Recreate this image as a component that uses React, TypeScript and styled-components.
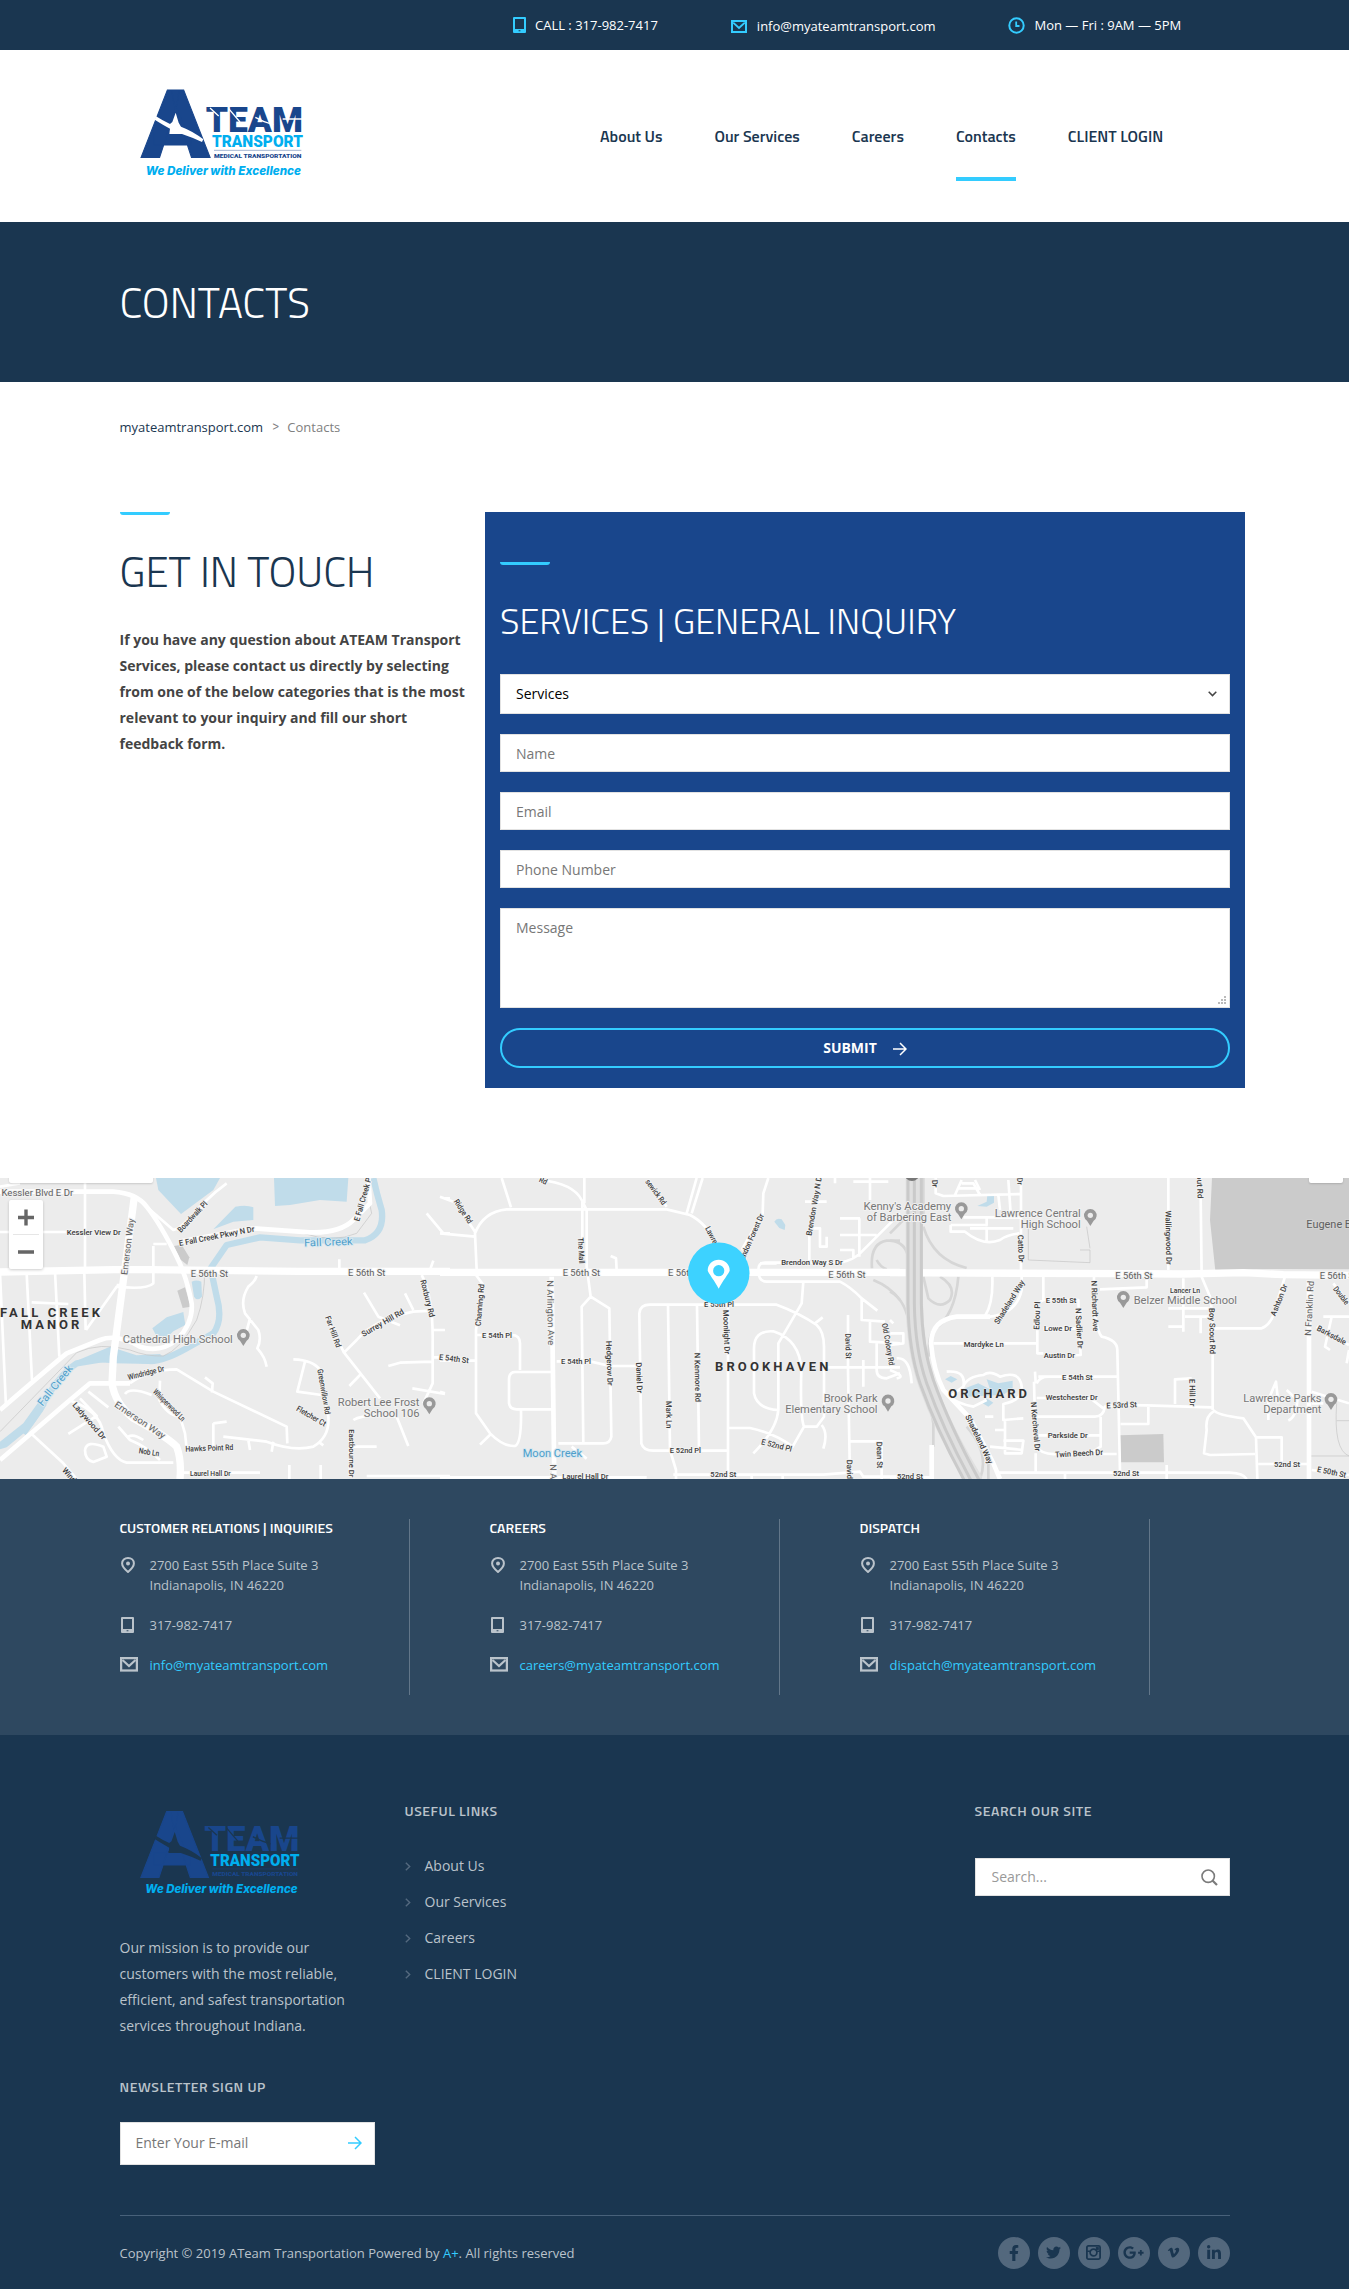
import React from 'react';
import styled, { createGlobalStyle } from 'styled-components';
import { FaFacebookF, FaTwitter, FaGooglePlusG, FaVimeoV, FaLinkedinIn } from 'react-icons/fa';

const navy = '#1a3650';
const slate = '#2e4860';
const royal = '#19468c';
const sky = '#33ccff';
const mist = '#bac3cb';
const head = '"Titillium Web", "Open Sans", sans-serif';

const GlobalStyle = createGlobalStyle`
  *, *::before, *::after { box-sizing: border-box; }
  body { margin: 0; background: #fff; font: 14px/26px "Open Sans", sans-serif; color: #444; }
  h1, h2, h3, h4, p, ul { margin: 0; padding: 0; }
  ul { list-style: none; }
  a { color: inherit; text-decoration: none; }
  svg { display: block; }
  input, textarea, button { font: inherit; border-radius: 0; outline: none; }
`;

/* ---------- layout ---------- */
const Container = styled.div`
  width: 1110px;
  margin: 0 auto;
`;

const TopBar = styled.div`
  height: 50px;
  padding-left: 513px;
  display: flex;
  align-items: center;
  gap: 73px;
  background: ${navy};
  color: #fff;
  font-size: 13px;
  line-height: 20px;
`;
const TopItem = styled.div<{ $drop?: number; $gap?: number }>`
  display: flex;
  align-items: center;
  gap: ${(p) => p.$gap ?? 9}px;
  padding-top: ${(p) => p.$drop ?? 0}px;
  white-space: nowrap;
  svg { color: ${sky}; }
`;

const Header = styled.header`
  height: 172px;
  display: flex;
  padding: 30px 0 0 130px;
`;
const LogoSlot = styled.div`
  width: 470px;
`;
const Nav = styled.nav`
  display: flex;
  align-self: flex-start;
  margin-top: 11px;
  gap: 52px;
  font: 600 16px/90px ${head};
  color: ${navy};
`;
const NavLink = styled.a<{ $active?: boolean }>`
  height: 90px;
  border-bottom: 4px solid ${(p) => (p.$active ? sky : 'transparent')};
`;

const TitleBand = styled.div`
  height: 160px;
  display: flex;
  align-items: center;
  background: ${navy};
`;
const PageTitle = styled.h1`
  font: 300 42px/50px ${head};
  color: #fff;
`;
const Crumbs = styled.div`
  display: flex;
  padding-top: 35px;
  height: 130px;
  font-size: 13px;
  line-height: 20px;
  color: #808080;
  a { color: ${navy}; }
`;
const CrumbSep = styled.span`
  margin: -2px 8px 0 9px;
  font-family: ${head};
`;

const Columns = styled.div`
  display: flex;
  height: 666px;
  align-items: flex-start;
`;
const Intro = styled.div`
  flex: none;
  width: 365.5px;
`;
const Accent = styled.div`
  width: 50px;
  height: 3px;
  border-radius: 0 0 3px 3px;
  background: ${sky};
`;
const IntroTitle = styled.h2`
  margin: 31px 0 31px;
  font: 300 42px/50px ${head};
  color: ${navy};
`;
const IntroText = styled.p`
  width: 350px;
  font-weight: 700;
`;

/* ---------- form ---------- */
const FormPanel = styled.form`
  flex: none;
  width: 760px;
  height: 576px;
  padding: 50px 15px 0;
  background: ${royal};
`;
const FormTitle = styled.h2`
  margin: 36px 0 33px;
  font: 300 36px/40px ${head};
  color: #fff;
`;
const Fields = styled.div`
  display: flex;
  flex-direction: column;
  gap: 20px;
`;
const SelectBox = styled.div`
  height: 40px;
  padding: 0 12px 0 15px;
  display: flex;
  align-items: center;
  justify-content: space-between;
  border: 1px solid #e2e2e2;
  background: #fff;
  color: #000;
`;
const Input = styled.input`
  width: 100%;
  height: 38px;
  padding: 0 15px;
  border: 1px solid #e2e2e2;
  background: #fff;
  &::placeholder { color: #777; opacity: 1; }
`;
const AreaWrap = styled.div`
  position: relative;
  height: 100px;
  svg { position: absolute; right: 4px; bottom: 4px; }
`;
const Area = styled.textarea`
  display: block;
  width: 100%;
  height: 100px;
  padding: 6px 15px;
  resize: none;
  border: 1px solid #e2e2e2;
  background: #fff;
  &::placeholder { color: #777; opacity: 1; }
`;
const Submit = styled.button`
  height: 40px;
  display: flex;
  align-items: center;
  justify-content: center;
  gap: 16px;
  border: 2px solid ${sky};
  border-radius: 20px !important;
  background: transparent;
  color: #fff;
  font-weight: 700;
  svg { margin-top: 2px; }
`;

/* ---------- map ---------- */
const MapFrame = styled.div`
  position: relative;
  height: 301px;
  overflow: hidden;
  background: #ececec;
`;
const ZoomControl = styled.div`
  position: absolute;
  left: 9px;
  top: 22px;
  width: 34px;
  height: 69px;
  border-radius: 2px;
  background: #fff;
  box-shadow: 0 1px 3px rgba(0, 0, 0, 0.2);
`;
const MapTab = styled.div<{ $left: number; $width: number }>`
  position: absolute;
  top: -10px;
  left: ${(p) => p.$left}px;
  width: ${(p) => p.$width}px;
  height: 15px;
  border-radius: 2px;
  background: #fff;
  box-shadow: 0 1px 2px rgba(0, 0, 0, 0.15);
`;

/* ---------- offices ---------- */
const Offices = styled.section`
  height: 256px;
  padding-top: 40px;
  background: ${slate};
  color: ${mist};
  font-size: 13px;
  line-height: 20px;
`;
const OfficeGrid = styled(Container)`
  display: grid;
  grid-template-columns: repeat(3, 290px);
  column-gap: 80px;
`;
const Office = styled.div`
  height: 176px;
  border-right: 1px solid #627689;
`;
const OfficeTitle = styled.h4`
  margin-bottom: 18px;
  font: 600 14px/18px ${head};
  color: #fff;
`;
const OfficeRows = styled.div`
  display: grid;
  grid-template-columns: 18px auto;
  column-gap: 12px;
  row-gap: 20px;
  a { color: ${sky}; }
`;
const IconCell = styled.span<{ $wide?: boolean }>`
  display: flex;
  justify-content: center;
  align-items: flex-start;
  padding: 2px ${(p) => (p.$wide ? 0 : 2)}px 0 0;
`;

/* ---------- footer ---------- */
const Footer = styled.footer`
  height: 554px;
  background: ${navy};
  color: ${mist};
`;
const FooterGrid = styled(Container)`
  display: grid;
  grid-template-columns: repeat(4, 255px);
  column-gap: 30px;
  height: 481px;
  border-bottom: 1px solid #48617a;
`;
const AboutCol = styled.div`
  padding-top: 65px;
`;
const FooterLogo = styled.div`
  margin: 0 0 27px 10px;
`;
const About = styled.p`
  margin-bottom: 38px;
`;
const WidgetTitle = styled.h4`
  font: 600 14px/20px ${head};
  letter-spacing: 0.56px;
`;
const Widget = styled.div`
  padding-top: 66px;
`;
const EmailField = styled.div`
  display: flex;
  align-items: center;
  height: 43px;
  margin-top: 25px;
  padding-right: 12px;
  border: 1px solid #e2e2e2;
  background: #fff;
  color: ${sky};
`;
const SearchField = styled(EmailField)`
  height: 38px;
  margin-top: 37px;
  padding-right: 11px;
  color: #7b7b7b;
`;
const PlainInput = styled.input<{ $tone: string; $inset?: number }>`
  flex: 1;
  min-width: 0;
  padding: 0 ${(p) => p.$inset ?? 15}px;
  border: 0;
  background: none;
  &::placeholder { color: ${(p) => p.$tone}; opacity: 1; }
`;
const LinkList = styled.ul`
  display: grid;
  row-gap: 10px;
  margin-top: 32px;
`;
const LinkItem = styled.li`
  display: flex;
  align-items: center;
  gap: 14px;
  svg { color: #54697f; }
`;
const Bottom = styled(Container)`
  display: flex;
  justify-content: space-between;
  align-items: center;
  height: 73px;
  font-size: 13px;
  a { color: ${sky}; }
`;
const Socials = styled.div`
  display: flex;
  gap: 8px;
`;
const Social = styled.span`
  width: 32px;
  height: 32px;
  display: flex;
  align-items: center;
  justify-content: center;
  border-radius: 50%;
  background: #53687d;
  color: ${navy};
`;

/* ---------- icons ---------- */
const PhoneIcon = () => (
  <svg width="13" height="16" viewBox="0 0 13 16" fill="currentColor" fillRule="evenodd">
    <path d="M1 0h11a1 1 0 0 1 1 1v14a1 1 0 0 1-1 1H1a1 1 0 0 1-1-1V1a1 1 0 0 1 1-1zM2 2v10h9V2zM5.6 13.3v1h1.8v-1z" />
  </svg>
);
const MailIcon = ({ w = 16 }: { w?: number }) => (
  <svg width={w} height={(w * 13) / 16} viewBox="0 0 16 13" fill="none" stroke="currentColor">
    <rect x="1" y="1" width="14" height="11" strokeWidth="2" />
    <path d="M2.2 2.6L8 8l5.800-5.400" strokeWidth="1.900" />
  </svg>
);
const ClockIcon = () => (
  <svg width="17" height="17" viewBox="0 0 17 17" fill="none" stroke="currentColor" strokeWidth="2">
    <circle cx="8.500" cy="8.500" r="7.200" />
    <path d="M8.200 4.500V9h3.300" strokeWidth="1.800" />
  </svg>
);
const PlaceIcon = () => (
  <svg width="14" height="16" viewBox="0 0 14 16">
    <path d="M7 1C3.600 1 1.100 3.300 1.100 6.400 1.100 9.600 4.200 12.500 7 15c2.800-2.500 5.900-5.400 5.900-8.600C12.900 3.300 10.400 1 7 1z" fill="none" stroke="currentColor" strokeWidth="2" />
    <circle cx="7" cy="6.500" r="2" fill="currentColor" />
  </svg>
);
const ArrowIcon = () => (
  <svg width="14" height="14" viewBox="0 0 14 14" fill="none" stroke="currentColor" strokeWidth="1.500">
    <path d="M0 7h13M7 1l6 6-6 6" />
  </svg>
);
const SearchIcon = () => (
  <svg width="17" height="17" viewBox="0 0 17 17" fill="none" stroke="currentColor">
    <circle cx="7.200" cy="7.200" r="6.200" strokeWidth="1.600" />
    <path d="M11.500 11.500l4.500 4.500" strokeWidth="2.200" />
  </svg>
);
const CameraIcon = () => (
  <svg width="15" height="15" viewBox="0 0 15 15" fill="none" stroke="currentColor">
    <rect x="0.900" y="0.900" width="13.200" height="13.200" rx="1.500" strokeWidth="1.800" />
    <circle cx="7.500" cy="7.500" r="3.400" strokeWidth="1.700" />
    <path d="M1 6.300h3.200M10.800 6.300H14" strokeWidth="1.400" />
    <rect x="10.300" y="2.600" width="2" height="1.800" fill="currentColor" />
  </svg>
);

/* ---------- logo ---------- */
const Logo = ({ cut, scale = 1 }: { cut: string; scale?: number }) => (
  <svg width={190 * scale} height={110 * scale} viewBox="0 0 570 330">
    <g fontFamily="Roboto" fontWeight="900" fill={royal}>
      <text x="34" y="235" fontSize="284" textLength="206" lengthAdjust="spacingAndGlyphs" stroke={royal} strokeWidth="3">A</text>
      <path d="M112 158L138 78l34 80z" />
      <path d="M78 109Q98 122 120 132L127 126 137 98 146 128 153 140Q190 154 220 178L216 186Q186 172 156 162H118L120 146Q98 134 74 119z" fill={cut} />
      <text x="227" y="156" fontSize="107" textLength="292" lengthAdjust="spacingAndGlyphs">TEAM</text>
      <path d="M240 84l26 24M296 86l34 40M376 112q24 14 54 22M458 117h62" stroke={cut} strokeWidth="4" fill="none" />
      <text x="246" y="202" fontSize="49" textLength="273" lengthAdjust="spacingAndGlyphs" fill="#00aeef">TRANSPORT</text>
      <path d="M252 211h262" stroke={royal} strokeOpacity=".4" strokeWidth="3" />
      <text x="252" y="234" fontSize="17.500" textLength="262" lengthAdjust="spacingAndGlyphs">MEDICAL TRANSPORTATION</text>
    </g>
    <text x="47" y="285" fontSize="36" fontFamily="Inter" fontWeight="800" fontStyle="italic" textLength="466" lengthAdjust="spacingAndGlyphs" fill="#00aeef">We Deliver with Excellence</text>
  </svg>
);

/* ---------- map drawing: three sheets, three units per pixel ---------- */
type Kind = 's' | 'm' | 'p' | 'w' | 'n' | 'd';
type Label = [text: string, cx: number, cy: number, len: number, rot?: number, kind?: Kind];
type Sheet = {
  x: number;
  water?: string[];
  stream?: string;
  grey?: string[];
  ramps?: string[];
  thin?: string;
  minor?: string;
  major?: string;
  main: string;
  pins: [number, number][];
  labels: Label[];
};

const tones: Record<Kind, { fill: string; size: number; weight: number; halo: string }> = {
  s: { fill: '#3c3c3c', size: 24, weight: 500, halo: '#f2f2f2' },
  m: { fill: '#606060', size: 27, weight: 400, halo: '#f2f2f2' },
  p: { fill: '#777', size: 33, weight: 400, halo: '#f2f2f2' },
  d: { fill: '#606060', size: 33, weight: 400, halo: '#d2d2d2' },
  w: { fill: '#4f9fcb', size: 32, weight: 400, halo: '#d8e8f0' },
  n: { fill: '#333', size: 39, weight: 700, halo: '#f2f2f2' },
};

const sheets: Sheet[] = [
  {
    x: 0,
    water: [
      'M468 24H660L640 60 543 132 475 60z',
      'M822 24H1045L1040 95 960 90 870 105 825 108z',
      'M640 178L706 110Q740 104 760 112V150L700 155z',
      'M575 335Q590 328 604 335L606 380Q592 396 582 380z',
      'M457 475L500 442 550 426 556 465 520 484 482 522z',
      'M230 572L330 530 410 556 480 552 500 570 450 582 340 580z',
      'M0 815L70 760 120 690 140 705 95 770 20 832 0 838z',
    ],
    stream: 'M1120 24Q1130 70 1145 120Q1155 190 1095 211H900L780 202 680 225 632 295 650 380Q670 450 640 490L560 535Q480 580 440 572L340 562 230 580Q170 620 120 720L70 790',
    grey: ['M522 228L545 224 568 262 562 285 540 268z', 'M532 362L555 352 572 410 548 414z'],
    thin: 'M614 300Q615 380 590 450Q540 540 490 558Q440 560 390 540Q300 515 230 548L180 600 0 785M760 178Q860 170 910 190Q1000 220 1070 190L1115 130 1100 60',
    minor:
      'M255 24V300M0 186H200M80 310L96 630M0 310L18 710M253 310L257 480M95 397L205 402M165 305L178 560M460 228V340Q440 360 350 350L258 480M365 345L350 345M500 222H460M440 110L520 180 550 170Q610 90 680 40M530 180L620 100M770 318Q765 335 745 350Q720 390 735 430L775 480Q785 510 772 535Q795 560 800 590M750 445L730 520M1018 268V300M1300 272L1290 300M1092 368L1135 440 1200 466M1215 370L1240 420M1265 315Q1300 380 1298 520V640L1270 700M1300 422L1240 425Q1120 450 1070 510L1032 548 980 440M1030 545L1140 685M1080 615L1048 648M1165 588L1200 578 1298 575M1300 562H1350M1300 480H1335M1237 655L1335 672M880 568Q940 570 960 600L985 740Q990 800 940 830Q880 845 800 815L670 800M915 575L892 665 965 675M955 815L970 826M390 640Q440 600 530 598L640 665 860 770 862 820M615 622L638 640 636 668M480 632L478 690Q500 735 540 740L555 790 560 835M455 675Q390 650 375 672M640 760L680 755M640 760V830M820 815L815 845M745 810L750 840M205 690Q300 720 310 790Q340 870 380 878H520M210 690L80 800M265 665L325 712M240 685L290 738 205 792M95 792L190 880 230 927M355 770L390 810Q440 830 480 870M385 800Q400 790 430 810M255 840Q260 810 310 830L320 860 280 876Q255 870 255 840M550 908H780M868 885V927M962 885V927M1100 918H1350M1060 750Q1090 730 1190 740L1225 828M1050 780V920M1060 830H1130M1280 130L1330 190H1350M1335 85H1350M205 24V30M0 50L60 40',
    major: 'M0 65H340Q410 70 440 110Q480 160 530 260Q560 320 575 400Q580 460 530 510Q480 550 420 530Q350 490 300 510L200 550Q150 590 0 720M540 215L760 175 930 187Q1020 190 1060 150L1110 100 1105 24M0 870L210 690 270 640H390',
    main: 'M0 306L380 298 900 304H1350M403 80L340 560 336 640Q345 700 400 745Q500 800 530 830Q545 870 540 927',
    pins: [[730, 500], [1288, 705]],
    labels: [
      ['Kessler Blvd E Dr', 112, 68, 215, 0, 'm'],
      ['Kessler View Dr', 281, 186, 162],
      ['Emerson Way', 383, 230, 170, -83, 'm'],
      ['Boardwalk Pl', 577, 140, 118, -47],
      ['E Fall Creek Pkwy N Dr', 650, 198, 230, -11],
      ['E Fall Creek P', 1088, 88, 135, -74],
      ['Fall Creek', 985, 216, 146, -2, 'w'],
      ['Fall Creek', 165, 646, 148, -51, 'w'],
      ['E 56th St', 628, 311, 112, 0, 'm'],
      ['E 56th St', 1100, 308, 112, 0, 'm'],
      ['FALL CREEK', 150, 426, 300, 0, 'n'],
      ['MANOR', 150, 464, 176, 0, 'n'],
      ['Cathedral High School', 533, 506, 330, 0, 'p'],
      ['Robert Lee Frost', 1136, 695, 245, 0, 'p'],
      ['School 106', 1175, 728, 167, 0, 'p'],
      ['Windridge Dr', 438, 608, 112, -14],
      ['Whisperwood Ln', 508, 705, 125, 45],
      ['Emerson Way', 420, 750, 178, 34, 'm'],
      ['Ladywood Dr', 268, 753, 140, 49],
      ['Nob Ln', 447, 846, 62, 8],
      ['Hawks Point Rd', 628, 834, 144, -2],
      ['Laurel Hall Dr', 631, 910, 122],
      ['Wind', 208, 915, 50, 48],
      ['Roxbury Rd', 1283, 385, 115, 76],
      ['Surrey Hill Rd', 1148, 458, 142, -30],
      ['Far Hill Rd', 1000, 485, 98, 70],
      ['Greenwillow Rd', 972, 665, 138, 80],
      ['Fletcher Ct', 934, 738, 98, 30],
      ['Eastbourne Dr', 1054, 850, 145, 90],
    ],
  },
  {
    x: 440,
    water: ['M1003 155Q1010 142 1025 148L1036 165 1034 180 1018 174z'],
    minor:
      'M185 24L213 112M300 30Q400 40 425 90L440 120V290L452 380 425 410 430 820M433 24V100M427 90V210M452 380L508 415 514 800Q510 820 490 820H355M110 300L105 190Q130 125 200 118H680L750 135Q800 160 830 225M770 24L740 130M788 24L755 130M625 30L680 110M45 95L108 190M0 190L105 200M0 80L40 95M108 315L130 345 108 480V730L150 790Q190 830 225 828Q245 820 243 720M155 790L120 824M110 495H215Q240 495 240 520V600M335 606H225Q207 606 207 630V700Q210 718 230 718H335M0 572H105M0 665L15 670M350 574H450L510 588H600M530 300L528 265 512 258M598 430Q600 404 630 404H1010Q1080 430 1130 465Q1152 485 1152 530V740L1130 770 1092 770M598 430L604 820Q610 842 640 842H860M684 404L690 840 708 900V927M771 404L777 840M864 404V927M864 774H930Q1005 790 1058 830L1092 770Q1080 740 1084 600Q1080 510 1000 484Q940 480 942 540V670Q950 716 1015 720M1090 335L1085 400 1015 520V720Q1010 780 940 850M1125 460L1148 442M1145 765Q1165 790 1150 836M960 280H1010M955 300Q955 278 975 278H1200Q1240 270 1260 250L1380 130M955 300Q955 335 980 335L1200 335Q1230 350 1265 385L1312 422M1108 270V180M985 24L970 70 968 130 905 240M1265 385V450L1335 455M1290 450L1290 515 1380 520M1224 435V600L1230 927M1150 592H1380M1270 570V650M1310 520V600Q1310 625 1340 625L1380 610M1228 814H1325V927M1160 200V230H1140V175H1120M1095 95H1160M1185 24V40M1240 35H1345M1290 24V90M1200 145H1260M1258 145V260M1200 195H1310M1200 240H1240V265M0 922H620M700 914H1150L1260 905 1270 920H1380M935 910V927M1028 910V927M205 720M395 830L440 866',
    major: 'M335 320L343 927',
    main: 'M0 307H1380',
    ramps: ['M1296 295Q1290 220 1340 212H1380M1300 330Q1350 350 1380 390', 'M1310 270Q1320 290 1340 298'],
    pins: [[1344, 697]],
    labels: [
      ['Ridge Rd', 70, 124, 82, 57],
      ['Rd', 310, 32, 24, 25],
      ['sewick Rd', 648, 66, 88, 54],
      ['The Mall', 424, 242, 78, 87],
      ['E 56th St', 424, 310, 112, 0, 'm'],
      ['E 56th St', 740, 310, 112, 0, 'm'],
      ['E 56th St', 1221, 314, 112, 0, 'm'],
      ['Channing Rd', 119, 405, 126, -85],
      ['N Arlington Ave', 332, 428, 195, 89, 'm'],
      ['E 54th Pl', 171, 495, 90],
      ['E 54th St', 42, 566, 90, 7],
      ['E 54th Pl', 408, 574, 90],
      ['Hedgerow Dr', 509, 580, 134, 88],
      ['Daniel Dr', 598, 623, 92, 88],
      ['N Kenmore Rd', 773, 622, 148, 89],
      ['Mark Ln', 687, 734, 82, 89],
      ['Moonlight Dr', 860, 486, 132, 88],
      ['E 55th Pl', 837, 402, 90],
      ['Lawre', 815, 195, 55, 62],
      ['endon Forest Dr', 935, 200, 148, -66],
      ['Brendon Way N D', 1122, 108, 180, -80],
      ['Brendon Way S Dr', 1116, 277, 185],
      ['BROOKHAVEN', 995, 590, 340, 0, 'n'],
      ['Brook Park', 1232, 685, 162, 0, 'p'],
      ['Elementary School', 1174, 718, 277, 0, 'p'],
      ['Moon Creek', 337, 849, 178, 0, 'w'],
      ['N A', 340, 905, 45, 89, 'm'],
      ['Laurel Hall Dr', 436, 919, 138],
      ['E 52nd Pl', 736, 842, 94],
      ['E 52nd Pl', 1010, 826, 94, 14],
      ['52nd St', 850, 913, 78],
      ['David St', 1225, 528, 76, 89],
      ['Old Colony Rd', 1345, 523, 128, 80],
      ['Dean St', 1319, 855, 80, 89],
      ['David', 1229, 898, 58, 89],
    ],
  },
  {
    x: 890,
    water: [
      'M262 108L290 95 292 74Q305 68 312 76V98L290 110z',
      'M165 628L182 618 202 628 185 638z',
      'M225 655L265 640 300 658 290 628 325 640 368 632V655L340 674 230 680z',
      'M278 700L290 685 310 698 295 710z',
    ],
    grey: ['M966 24H1377V298L1100 297 976 302 960 150z', 'M690 796L820 792 822 877H693z'],
    thin: 'M415 160V270L600 278V240H570M600 235L590 170M1340 700Q1330 840 1377 858H1260M1340 752H1377',
    ramps: [
      'M100 170Q130 270 230 294M0 212Q50 215 55 270M0 365Q50 390 60 480L80 590Q120 680 130 760V830M205 320Q195 440 130 480Q112 510 118 560',
      'M150 320Q200 350 180 390Q150 420 115 385L100 320M270 927Q300 850 230 770M0 190L50 140M100 24V160M295 927V860',
    ],
    minor:
      'M137 24V70L160 78 390 72M215 40H250L270 75M215 30L195 75M255 30L270 60M205 55H262M325 75L330 120M355 30L362 130M220 142H390M182 165H290V140M182 165V185H225Q280 230 330 210Q350 195 388 190M240 175H370M290 170V220M393 24V300M307 320Q310 400 285 438M395 320V360Q380 430 300 440H190M460 320V390L442 400V550H460M442 520H130M460 390H565L572 555 545 556M460 475H570M612 320Q610 470 635 500Q682 510 682 540L690 905M770 330V352L630 358M835 24V300M932 80L935 320 960 380 968 440V720M880 325V485M835 415H960M835 470H880M885 440H968M932 440V490M970 475H1115Q1150 460 1160 400L1185 320M445 620H680M435 605L437 640M440 640Q450 620 475 620M432 635L437 830M440 684H600L640 715M425 740H615Q640 740 645 710L680 705 770 706 965 712M632 740V830L600 850M445 796H630M440 830Q455 855 500 852H680M692 762H775V706M855 702V628L905 625M970 720Q980 735 1060 745L1098 802H1175V875M970 725Q945 740 950 780L942 850 960 855 1095 852M1098 802L1102 927M1105 882H1255M437 850V905M325 908H1020Q1060 910 1070 927M525 910V927M830 885V927M340 700V750L400 745M345 750V850H395L400 812H340M315 780H345M285 740H310M400 812V815M170 605Q230 600 220 650L180 680Q200 700 250 710L290 690M220 650Q230 620 280 615Q300 600 330 620Q390 600 395 650Q400 690 340 702M300 830L400 840M1135 750V690L1158 635 1165 700M1190 660L1222 690Q1220 740 1195 752M1265 665L1377 700M1265 700H1300M1300 440H1377M1325 440L1305 530 1320 540M1330 340L1377 400M1280 470L1377 525M1377 540L1370 580M0 450L10 460M0 490H40V520L0 525M20 565Q60 560 65 640M0 600Q50 620 20 625M0 922H120M1265 900L1377 915',
    major: 'M300 440H200Q125 450 123 520Q130 600 160 660L240 745 310 880 330 927M1257 330V927M125 825V927',
    main: 'M0 308L690 311 880 312 1060 308 1180 314 1377 316',
    pins: [[214, 120], [601, 140], [700, 386], [1323, 692]],
    labels: [
      ["Kenny's Academy", 52, 109, 263, 0, 'p'],
      ['of Barbering East', 57, 142, 254, 0, 'p'],
      ['Lawrence Central', 443, 129, 258, 0, 'p'],
      ['High School', 482, 162, 180, 0, 'p'],
      ['Belzer Middle School', 886, 390, 310, 0, 'p'],
      ['Lawrence Parks', 1177, 683, 235, 0, 'p'],
      ['Department', 1207, 716, 175, 0, 'p'],
      ['Eugene B', 1317, 163, 136, 0, 'd'],
      ['ORCHARD', 293, 669, 236, 0, 'n'],
      ['l Dr', 135, 35, 34, 88],
      ['Dr', 390, 34, 20, 88],
      ['Catto Dr', 393, 236, 82, 88],
      ['Shadeland Way', 358, 396, 150, -58],
      ['Shadeland Way', 268, 808, 160, 64],
      ['E 55th St', 513, 391, 92],
      ['Lowe Dr', 504, 475, 84],
      ['Austin Dr', 508, 556, 94],
      ['E 54th St', 562, 621, 92],
      ['Edlou Pl', 441, 437, 84, -88],
      ['N Sadlier Dr', 568, 475, 122, 87],
      ['N Richardt Ave', 615, 408, 152, 88],
      ['Mardyke Ln', 281, 522, 120],
      ['Westchester Dr', 545, 682, 156],
      ['E 53rd St', 695, 705, 92, -3],
      ['N Kercheval Dr', 437, 770, 148, 85],
      ['Parkside Dr', 533, 796, 120],
      ['Twin Beech Dr', 567, 850, 144, -3],
      ['52nd St', 708, 911, 78],
      ['52nd St', 60, 919, 78],
      ['52nd St', 1191, 882, 78],
      ['E 50th St', 1325, 906, 88, 12],
      ['E 56th St', 732, 317, 112, 0, 'm'],
      ['E 56th St', 1345, 317, 112, 0, 'm'],
      ['Wallingwood Dr', 836, 203, 162, 89],
      ['out Rd', 930, 50, 70, 88],
      ['Lancer Ln', 885, 360, 90],
      ['Boy Scout Rd', 967, 483, 138, 89],
      ['E Hill Dr', 907, 668, 82, 89],
      ['Ashton Dr', 1167, 390, 100, -68],
      ['N Franklin Rd', 1258, 415, 165, -87, 'm'],
      ['Double', 1354, 376, 62, 52],
      ['Barksdale', 1325, 495, 96, 28],
    ],
  },
];

const CityMap = () => (
  <svg width="1349" height="301" viewBox="0 0 1349 301" fontFamily="Roboto" fill="none" strokeLinejoin="round">
    {sheets.map((s) => (
      <g key={s.x} transform={`translate(${s.x} -8) scale(.33333)`}>
        {s.grey?.map((d) => <path key={d} d={d} fill="#cbcbcb" />)}
        {s.water?.map((d) => <path key={d} d={d} fill="#c0dcea" />)}
        {s.stream && <path d={s.stream} stroke="#c0dcea" strokeWidth="19" />}
        {s.thin && <path d={s.thin} stroke="#c4c4c4" strokeWidth="2" />}
        {s.ramps?.map((d) => <path key={d} d={d} stroke="#d6d6d6" strokeWidth="8" />)}
        {s.minor && <path d={s.minor} stroke="#fff" strokeWidth="8" />}
        {s.major && <path d={s.major} stroke="#fff" strokeWidth="14" />}
        <path d={s.main} stroke="#fff" strokeWidth="22" />
      </g>
    ))}
    <g transform="translate(890 -8) scale(.33333)">
      <path d="M73 24V400Q75 540 110 640Q160 780 255 935" stroke="#e0e0e0" strokeWidth="52" />
      <path d="M54 24V400Q56 540 90 640Q140 780 225 935M73 24V400Q75 540 110 640Q160 780 245 935M94 24V400Q96 530 130 630Q180 770 270 935" stroke="#cacaca" strokeWidth="9" />
      <circle cx="66" cy="10" r="23" fill="#777" />
    </g>
    {sheets.map((s) => (
      <g key={s.x} transform={`translate(${s.x} -8) scale(.33333)`}>
        {s.pins.map(([x, y]) => (
          <g key={x} transform={`translate(${x} ${y})`}>
            <path d="M0 28L-10 12A19 19 0 1 1 10 12z" fill="#999" />
            <circle cy="-4" r="8" fill="#ececec" />
          </g>
        ))}
        {s.labels.map(([t, x, y, len, rot = 0, kind = 's']) => {
          const k = tones[kind];
          return (
            <text
              key={t + x}
              transform={`translate(${x} ${y}) rotate(${rot})`}
              y={k.size * 0.35}
              textAnchor="middle"
              fontSize={k.size}
              fontWeight={k.weight}
              textLength={len}
              lengthAdjust={kind === 'n' ? 'spacing' : 'spacingAndGlyphs'}
              fill={k.fill}
              stroke={k.halo}
              strokeWidth={kind === 'n' ? 3 : 6}
              paintOrder="stroke"
            >
              {t}
            </text>
          );
        })}
      </g>
    ))}
    <g transform="translate(718.700 95.300)">
      <circle r="30.800" fill="#3dd2ff" />
      <path d="M0 15.500C-3 9-11-1-11-2.800A11 10.800 0 0 1 11-2.800C11-1 3 9 0 15.500z" fill="#fff" />
      <circle cy="-2.600" r="5.600" fill="#3dd2ff" />
    </g>
  </svg>
);

const offices = [
  { title: 'CUSTOMER RELATIONS | INQUIRIES', mail: 'info@myateamtransport.com' },
  { title: 'CAREERS', mail: 'careers@myateamtransport.com' },
  { title: 'DISPATCH', mail: 'dispatch@myateamtransport.com' },
];
const links = ['About Us', 'Our Services', 'Careers', 'CLIENT LOGIN'];

export default function App() {
  return (
    <>
      <GlobalStyle />
      <TopBar>
        <TopItem><PhoneIcon />CALL : 317-982-7417</TopItem>
        <TopItem $drop={2} $gap={10}><MailIcon />info@myateamtransport.com</TopItem>
        <TopItem><ClockIcon />Mon — Fri : 9AM — 5PM</TopItem>
      </TopBar>
      <Header>
        <LogoSlot><Logo cut="#fff" /></LogoSlot>
        <Nav>
          <NavLink>About Us</NavLink>
          <NavLink>Our Services</NavLink>
          <NavLink>Careers</NavLink>
          <NavLink $active>Contacts</NavLink>
          <NavLink>CLIENT LOGIN</NavLink>
        </Nav>
      </Header>
      <TitleBand>
        <Container><PageTitle>CONTACTS</PageTitle></Container>
      </TitleBand>
      <Container>
        <Crumbs>
          <a>myateamtransport.com</a>
          <CrumbSep>&gt;</CrumbSep>
          <span>Contacts</span>
        </Crumbs>
        <Columns>
          <Intro>
            <Accent />
            <IntroTitle>GET IN TOUCH</IntroTitle>
            <IntroText>
              If you have any question about ATEAM Transport Services, please contact us directly by selecting from one of
              the below categories that is the most relevant to your inquiry and fill our short feedback form.
            </IntroText>
          </Intro>
          <FormPanel>
            <Accent />
            <FormTitle>SERVICES | GENERAL INQUIRY</FormTitle>
            <Fields>
              <SelectBox>
                Services
                <svg width="9" height="6" viewBox="0 0 9 6" fill="none" stroke="#444" strokeWidth="1.500">
                  <path d="M0.700 0.800L4.500 4.600 8.300 0.800" />
                </svg>
              </SelectBox>
              <Input placeholder="Name" />
              <Input placeholder="Email" />
              <Input placeholder="Phone Number" />
              <AreaWrap>
                <Area placeholder="Message" />
                <svg width="8" height="8" viewBox="0 0 8 8" fill="#bbb">
                  <path d="M6 0h2v2H6zM6 3h2v2H6zM3 3h2v2H3zM6 6h2v2H6zM3 6h2v2H3zM0 6h2v2H0z" />
                </svg>
              </AreaWrap>
              <Submit type="button">SUBMIT<ArrowIcon /></Submit>
            </Fields>
          </FormPanel>
        </Columns>
      </Container>
      <MapFrame>
        <CityMap />
        <MapTab $left={9} $width={144} />
        <MapTab $left={1309} $width={34} />
        <ZoomControl>
          <svg width="34" height="69" viewBox="0 0 34 69" fill="none" stroke="#666" strokeWidth="3.400">
            <path d="M9 17.500h16M17 9.500v16M9 52h16" />
            <path d="M4 34.500h26" stroke="#e6e6e6" strokeWidth="1" />
          </svg>
        </ZoomControl>
      </MapFrame>
      <Offices>
        <OfficeGrid>
          {offices.map((o) => (
            <Office key={o.title}>
              <OfficeTitle>{o.title}</OfficeTitle>
              <OfficeRows>
                <IconCell><PlaceIcon /></IconCell>
                <span>2700 East 55th Place Suite 3<br />Indianapolis, IN 46220</span>
                <IconCell><PhoneIcon /></IconCell>
                <span>317-982-7417</span>
                <IconCell $wide><MailIcon w={18} /></IconCell>
                <a>{o.mail}</a>
              </OfficeRows>
            </Office>
          ))}
        </OfficeGrid>
      </Offices>
      <Footer>
        <FooterGrid>
          <AboutCol>
            <FooterLogo><Logo cut={navy} scale={0.98} /></FooterLogo>
            <About>
              Our mission is to provide our<br />customers with the most reliable,<br />efficient, and safest
              transportation<br />services throughout Indiana.
            </About>
            <WidgetTitle>NEWSLETTER SIGN UP</WidgetTitle>
            <EmailField><PlainInput $tone="#777" placeholder="Enter Your E-mail" /><ArrowIcon /></EmailField>
          </AboutCol>
          <Widget>
            <WidgetTitle>USEFUL LINKS</WidgetTitle>
            <LinkList>
              {links.map((l) => (
                <LinkItem key={l}>
                  <svg width="6" height="9" viewBox="0 0 6 9" fill="none" stroke="currentColor" strokeWidth="1.400">
                    <path d="M0.800 0.800L4.700 4.500 0.800 8.200" />
                  </svg>
                  {l}
                </LinkItem>
              ))}
            </LinkList>
          </Widget>
          <span />
          <Widget>
            <WidgetTitle>SEARCH OUR SITE</WidgetTitle>
            <SearchField><PlainInput $tone="#999" $inset={16} placeholder="Search..." /><SearchIcon /></SearchField>
          </Widget>
        </FooterGrid>
        <Bottom>
          <span>Copyright © 2019 ATeam Transportation Powered by <a>A+</a>. All rights reserved</span>
          <Socials>
            <Social><FaFacebookF size={16} /></Social>
            <Social><FaTwitter size={15} /></Social>
            <Social><CameraIcon /></Social>
            <Social><FaGooglePlusG size={21} /></Social>
            <Social><FaVimeoV size={13} /></Social>
            <Social><FaLinkedinIn size={16} /></Social>
          </Socials>
        </Bottom>
      </Footer>
    </>
  );
}
